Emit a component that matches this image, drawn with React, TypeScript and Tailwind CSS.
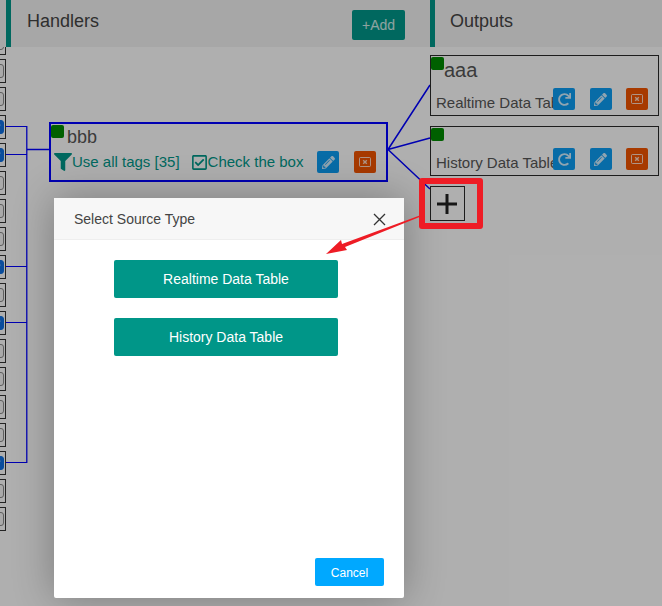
import { FaFilter, FaPencilAlt, FaRedo, FaRegCheckSquare } from 'react-icons/fa'

const tagRows = [false, false, false, true, true, false, false, false, true, false, true, false, false, false, false, true, false, false]

function DeleteIcon() {
  return (
    <svg width="12" height="12" viewBox="0 0 12 12" fill="none">
      <rect x="0.5" y="1.5" width="11" height="9" rx="1" stroke="white" strokeOpacity="0.75" />
      <path d="M4.2 4.2l3.6 3.6M7.8 4.2l-3.6 3.6" stroke="white" strokeOpacity="0.75" strokeWidth="1.4" />
    </svg>
  )
}

function IconButton({ kind }: { kind: 'refresh' | 'edit' | 'delete' }) {
  const color = kind === 'delete' ? 'bg-[#f05400]' : 'bg-[#0c9bf0]'
  return (
    <button className={`flex h-[22px] w-[22px] items-center justify-center rounded-[2px] text-[13px] text-white/80 ${color}`}>
      {kind === 'refresh' && <FaRedo />}
      {kind === 'edit' && <FaPencilAlt />}
      {kind === 'delete' && <DeleteIcon />}
    </button>
  )
}

function OutputNode({ top, height, name, label, buttonsTop, labelTop }: { top: string; height: string; name: string; label: string; buttonsTop: string; labelTop: string }) {
  return (
    <div className={`absolute left-[430px] w-[229px] border border-[#2a2a2a] ${top} ${height}`}>
      <span className="absolute left-0 top-[1px] h-[13px] w-[13px] rounded-[2px] bg-[#008a00]" />
      <span className="absolute left-[13px] top-[3px] text-[20px] leading-[23px] text-[#555]">{name}</span>
      <span className={`absolute left-[5px] whitespace-nowrap text-[15px] leading-[17px] text-[#555] ${labelTop}`}>{label}</span>
      <div className={`absolute left-[122px] flex gap-[14.500px] ${buttonsTop}`}>
        <IconButton kind="refresh" />
        <IconButton kind="edit" />
        <IconButton kind="delete" />
      </div>
    </div>
  )
}

export default function App() {
  return (
    <div className="relative h-[606px] w-[662px] overflow-hidden bg-[#fbfbfb] font-['Liberation_Sans',Arial,sans-serif]">
      {/* page header */}
      <header className="relative z-10 flex h-[47px] bg-[#f0f0f0] pl-[6px]">
        <div className="flex w-[424px] items-start justify-between border-l-[5px] border-[#009688] pl-[16px] pr-[25px]">
          <h2 className="mt-[11px] text-[18px] leading-[21px] text-[#444]">Handlers</h2>
          <button className="mt-[10px] h-[30px] w-[53px] rounded-[2px] bg-[#009688] text-[14px] text-white/80">+Add</button>
        </div>
        <div className="flex flex-1 items-start border-l-[5px] border-[#009688] pl-[15px]">
          <h2 className="mt-[11px] text-[18px] leading-[21px] text-[#444]">Outputs</h2>
        </div>
      </header>

      {/* flow canvas */}
      <main className="absolute inset-x-0 bottom-0 top-[47px] overflow-hidden">
        <div className="absolute left-[-30px] top-[-16px] flex w-[36px] flex-col gap-[4px]">
          {tagRows.map((checked, i) => (
            <div key={i} className="flex h-[24px] items-center justify-end border border-[#333] pr-[1px]">
              <span className={`flex h-[14px] w-[14px] items-center justify-center rounded-[3px] border ${checked ? 'border-[#0f6fe0] bg-[#0f6fe0]' : 'border-[#888] bg-[#f4f4f4]'}`}>
                {checked && (
                  <svg width="10" height="10" viewBox="0 0 10 10" fill="none">
                    <path d="M2 5l2 2 4-4.500" stroke="white" strokeWidth="1.600" />
                  </svg>
                )}
              </span>
            </div>
          ))}
        </div>

        <svg className="absolute inset-0 h-full w-full" fill="none" stroke="#0000ff">
          <path d="M6 79.500H27M6 107.500H27M6 219.500H27M6 275.500H27M6 415.500H27" />
          <path d="M26.750 79V416" strokeWidth="1.500" strokeOpacity="0.85" />
          <path d="M27 102.500H49" strokeWidth="1.500" />
          <path d="M388 102.500L430 38M388 102.500L430 91M388 102.500L430 142" strokeWidth="1.500" />
        </svg>

        <section className="absolute left-[49px] top-[75px] h-[60px] w-[339px] border-2 border-[#0000ff]">
          <span className="absolute left-0 top-[1px] h-[13px] w-[13px] rounded-[2px] bg-[#008a00]" />
          <span className="absolute left-[16px] top-[3px] text-[18px] leading-[21px] text-[#555]">bbb</span>
          <div className="absolute left-[3px] top-[27px] flex items-center text-[15px] leading-[22px] text-[#009688]">
            <FaFilter className="text-[18px]" />
            <span>Use all tags [35]</span>
            <FaRegCheckSquare className="ml-[11px] text-[17px]" />
            <span>Check the box</span>
          </div>
          <div className="absolute left-[266px] top-[27px] flex gap-[15px]">
            <IconButton kind="edit" />
            <IconButton kind="delete" />
          </div>
        </section>

        <OutputNode top="top-[8px]" height="h-[61px]" name="aaa" label="Realtime Data Table" labelTop="top-[38px]" buttonsTop="top-[32px]" />
        <OutputNode top="top-[79px]" height="h-[50px]" name="" label="History Data Table" labelTop="top-[27px]" buttonsTop="top-[21px]" />

        <button className="absolute left-[430px] top-[139px] flex h-[35px] w-[35px] items-center justify-center border border-[#2a2a2a] pr-[1px]">
          <svg width="20" height="20" viewBox="0 0 20 20" fill="none">
            <path d="M10 0v20M0 10h20" stroke="#222" strokeWidth="3" />
          </svg>
        </button>
      </main>

      {/* dialog */}
      <div className="absolute inset-0 z-20 bg-black/30" />
      <div className="absolute left-[54px] top-[198px] z-30 flex h-[400px] w-[350px] flex-col rounded-[2px] bg-white shadow-[0_0_40px_rgba(0,0,0,0.3)]">
        <div className="flex h-[42px] items-center justify-between border-b border-[#eeeeee] bg-[#f7f7f7] pl-[20px] pr-[18px] pt-[2px]">
          <span className="text-[14px] text-[#444]">Select Source Type</span>
          <svg width="13" height="13" viewBox="0 0 13 13" fill="none">
            <path d="M1 1l11 11M12 1L1 12" stroke="#333" strokeWidth="1.300" />
          </svg>
        </div>
        <div className="flex flex-1 flex-col items-center gap-[20px] pr-[6px] pt-[20px]">
          <button className="h-[38px] w-[224px] rounded-[2px] bg-[#009688] text-[14px] text-white">Realtime Data Table</button>
          <button className="h-[38px] w-[224px] rounded-[2px] bg-[#009688] text-[14px] text-white">History Data Table</button>
        </div>
        <div className="flex justify-end pb-[12px] pr-[20px]">
          <button className="h-[28px] w-[69px] rounded-[2px] bg-[#00a8ff] pt-[1px] text-[12px] text-white">Cancel</button>
        </div>
      </div>

      {/* screenshot annotation */}
      <div className="absolute left-[419px] top-[178px] z-40 h-[51px] w-[64px] rounded-[3px] border-[6px] border-[#ee1c25]" />
      <svg className="absolute inset-0 z-40 h-full w-full" fill="none">
        <path d="M419 215.800L419.500 217L345 247L347 250L326 254L341 240L342 244Z" fill="#ee1c25" />
      </svg>
    </div>
  )
}
